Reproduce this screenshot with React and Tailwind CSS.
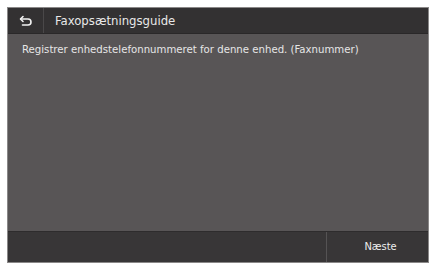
import React from 'react';

function BackIcon() {
  return (
    <svg width="14" height="12" viewBox="0 0 14 12" fill="none">
      <path d="M4 1.5 L1.5 4 L4 6.5" stroke="#f2f2f2" strokeWidth="1.6" strokeLinejoin="round" strokeLinecap="round" />
      <path d="M1.8 4 H9 a3 3 0 0 1 0 6 H3.5" stroke="#f2f2f2" strokeWidth="1.6" strokeLinecap="round" />
    </svg>
  );
}

export default function App() {
  return (
    <div className="w-[434px] h-[265px] bg-white pt-[7px] pl-[7px] pr-[5px] pb-[2px]" style={{ fontFamily: '"Liberation Sans Narrow", "DejaVu Sans Condensed", "Liberation Sans", sans-serif' }}>
      <div className="w-full h-full flex flex-col border border-[#8a8888] bg-[#585556]">
        <div className="h-[26px] flex bg-[#333132] border-b border-[#2a2829]">
          <div className="w-[36px] flex items-center justify-center border-r border-[#4a4849]">
            <BackIcon />
          </div>
          <div className="flex items-center pl-[11px] text-[13px] text-[#e8e8e8]">Faxopsætningsguide</div>
        </div>
        <div className="flex-1 px-[14px] pt-[8px] text-[11.3px] text-[#e6e6e6]">
          Registrer enhedstelefonnummeret for denne enhed. (Faxnummer)
        </div>
        <div className="h-[31px] flex bg-[#383637] border-t border-[#2e2c2d]">
          <div className="flex-1 border-r border-[#555354]"></div>
          <div className="w-[101px] flex items-center justify-center pl-[6px] text-[11px] text-[#eeeeee]">Næste</div>
        </div>
      </div>
    </div>
  );
}
